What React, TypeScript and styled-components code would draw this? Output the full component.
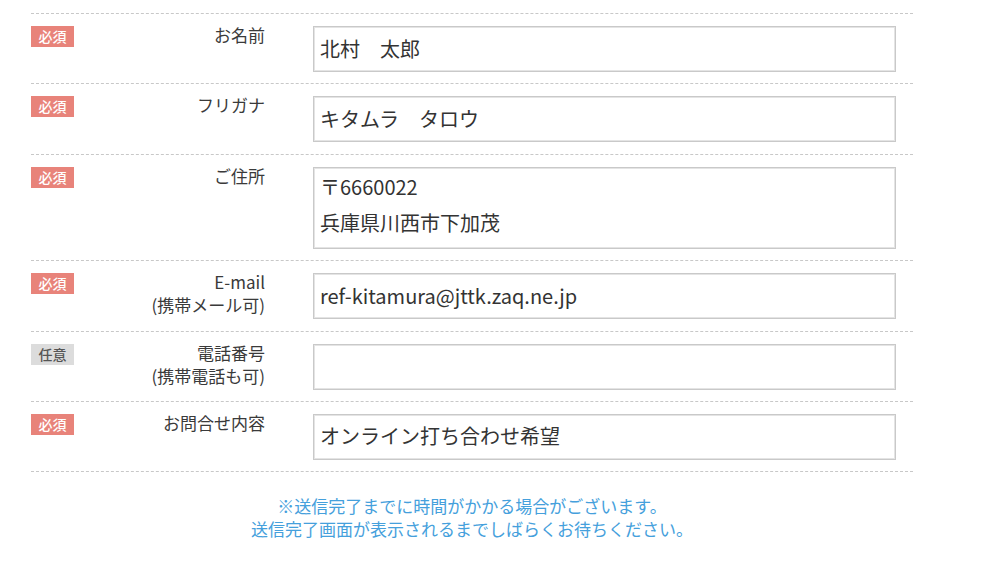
import React from "react";
import styled, { createGlobalStyle } from "styled-components";

const GlobalStyle = createGlobalStyle`
  html, body {
    margin: 0;
    padding: 0;
    background: #ffffff;
  }
  body {
    font-family: "Noto Sans CJK JP", "Noto Sans", sans-serif;
    color: #333333;
  }
`;

const Form = styled.div`
  width: 882px;
  margin-left: 31px;
  padding-top: 13px;
`;

const Row = styled.div`
  display: grid;
  grid-template-columns: 43px 239px 583px;
  align-items: start;
  border-top: 1px dashed #c8c8c8;
  padding: 12px 0 11.4px;
  &:last-of-type {
    border-bottom: 1px dashed #c8c8c8;
  }
`;

const Badge = styled.span<{ $required: boolean }>`
  display: block;
  height: 21px;
  line-height: 21px;
  text-align: center;
  font-size: 14px;
  font-weight: 500;
  color: ${(p) => (p.$required ? "#ffffff" : "#555555")};
  background: ${(p) => (p.$required ? "#e8837a" : "#dcdcdc")};
`;

const Label = styled.div`
  text-align: right;
  padding-right: 48px;
  margin-top: -3px;
  font-size: 17px;
  line-height: 23px;
  color: #3a3a3a;
`;

const Field = styled.input`
  box-sizing: border-box;
  display: block;
  width: 100%;
  height: 46px;
  margin: 0;
  padding: 0 6px 2px;
  border: 1px solid #c9c9c9;
  box-shadow: inset 0 0 0 1px #e4e4e4;
  border-radius: 0;
  background: #ffffff;
  font-family: "Noto Sans CJK JP", "Noto Sans", sans-serif;
  font-size: 20px;
  color: #333333;
  outline: none;
`;

const AddressBox = styled.div`
  box-sizing: border-box;
  height: 82px;
  padding: 1px 6px;
  border: 1px solid #c9c9c9;
  box-shadow: inset 0 0 0 1px #e4e4e4;
  background: #ffffff;
  display: flex;
  flex-direction: column;
`;

const AddressLine = styled.input`
  box-sizing: border-box;
  display: block;
  width: 100%;
  height: 36px;
  margin: 0;
  padding: 0;
  border: none;
  background: transparent;
  font-family: "Noto Sans CJK JP", "Noto Sans", sans-serif;
  font-size: 20px;
  color: #333333;
  outline: none;
`;

const Note = styled.p`
  margin: 0;
  padding-top: 22px;
  text-align: center;
  font-size: 17px;
  line-height: 23px;
  color: #45a0dc;
`;

type RowData = {
  required: boolean;
  label: string[];
  value?: string;
  address?: string[];
};

const rows: RowData[] = [
  { required: true, label: ["お名前"], value: "北村　太郎" },
  { required: true, label: ["フリガナ"], value: "キタムラ　タロウ" },
  { required: true, label: ["ご住所"], address: ["〒6660022", "兵庫県川西市下加茂"] },
  { required: true, label: ["E-mail", "(携帯メール可)"], value: "ref-kitamura@jttk.zaq.ne.jp" },
  { required: false, label: ["電話番号", "(携帯電話も可)"], value: "" },
  { required: true, label: ["お問合せ内容"], value: "オンライン打ち合わせ希望" },
];

export default function App() {
  return (
    <>
      <GlobalStyle />
      <Form>
        {rows.map((r, i) => (
          <Row key={i}>
            <Badge $required={r.required}>{r.required ? "必須" : "任意"}</Badge>
            <Label>
              {r.label.map((l, j) => (
                <div key={j}>{l}</div>
              ))}
            </Label>
            {r.address ? (
              <AddressBox>
                {r.address.map((a, j) => (
                  <AddressLine key={j} readOnly defaultValue={a} />
                ))}
              </AddressBox>
            ) : (
              <Field readOnly defaultValue={r.value} />
            )}
          </Row>
        ))}
        <Note>
          ※送信完了までに時間がかかる場合がございます。
          <br />
          送信完了画面が表示されるまでしばらくお待ちください。
        </Note>
      </Form>
    </>
  );
}
